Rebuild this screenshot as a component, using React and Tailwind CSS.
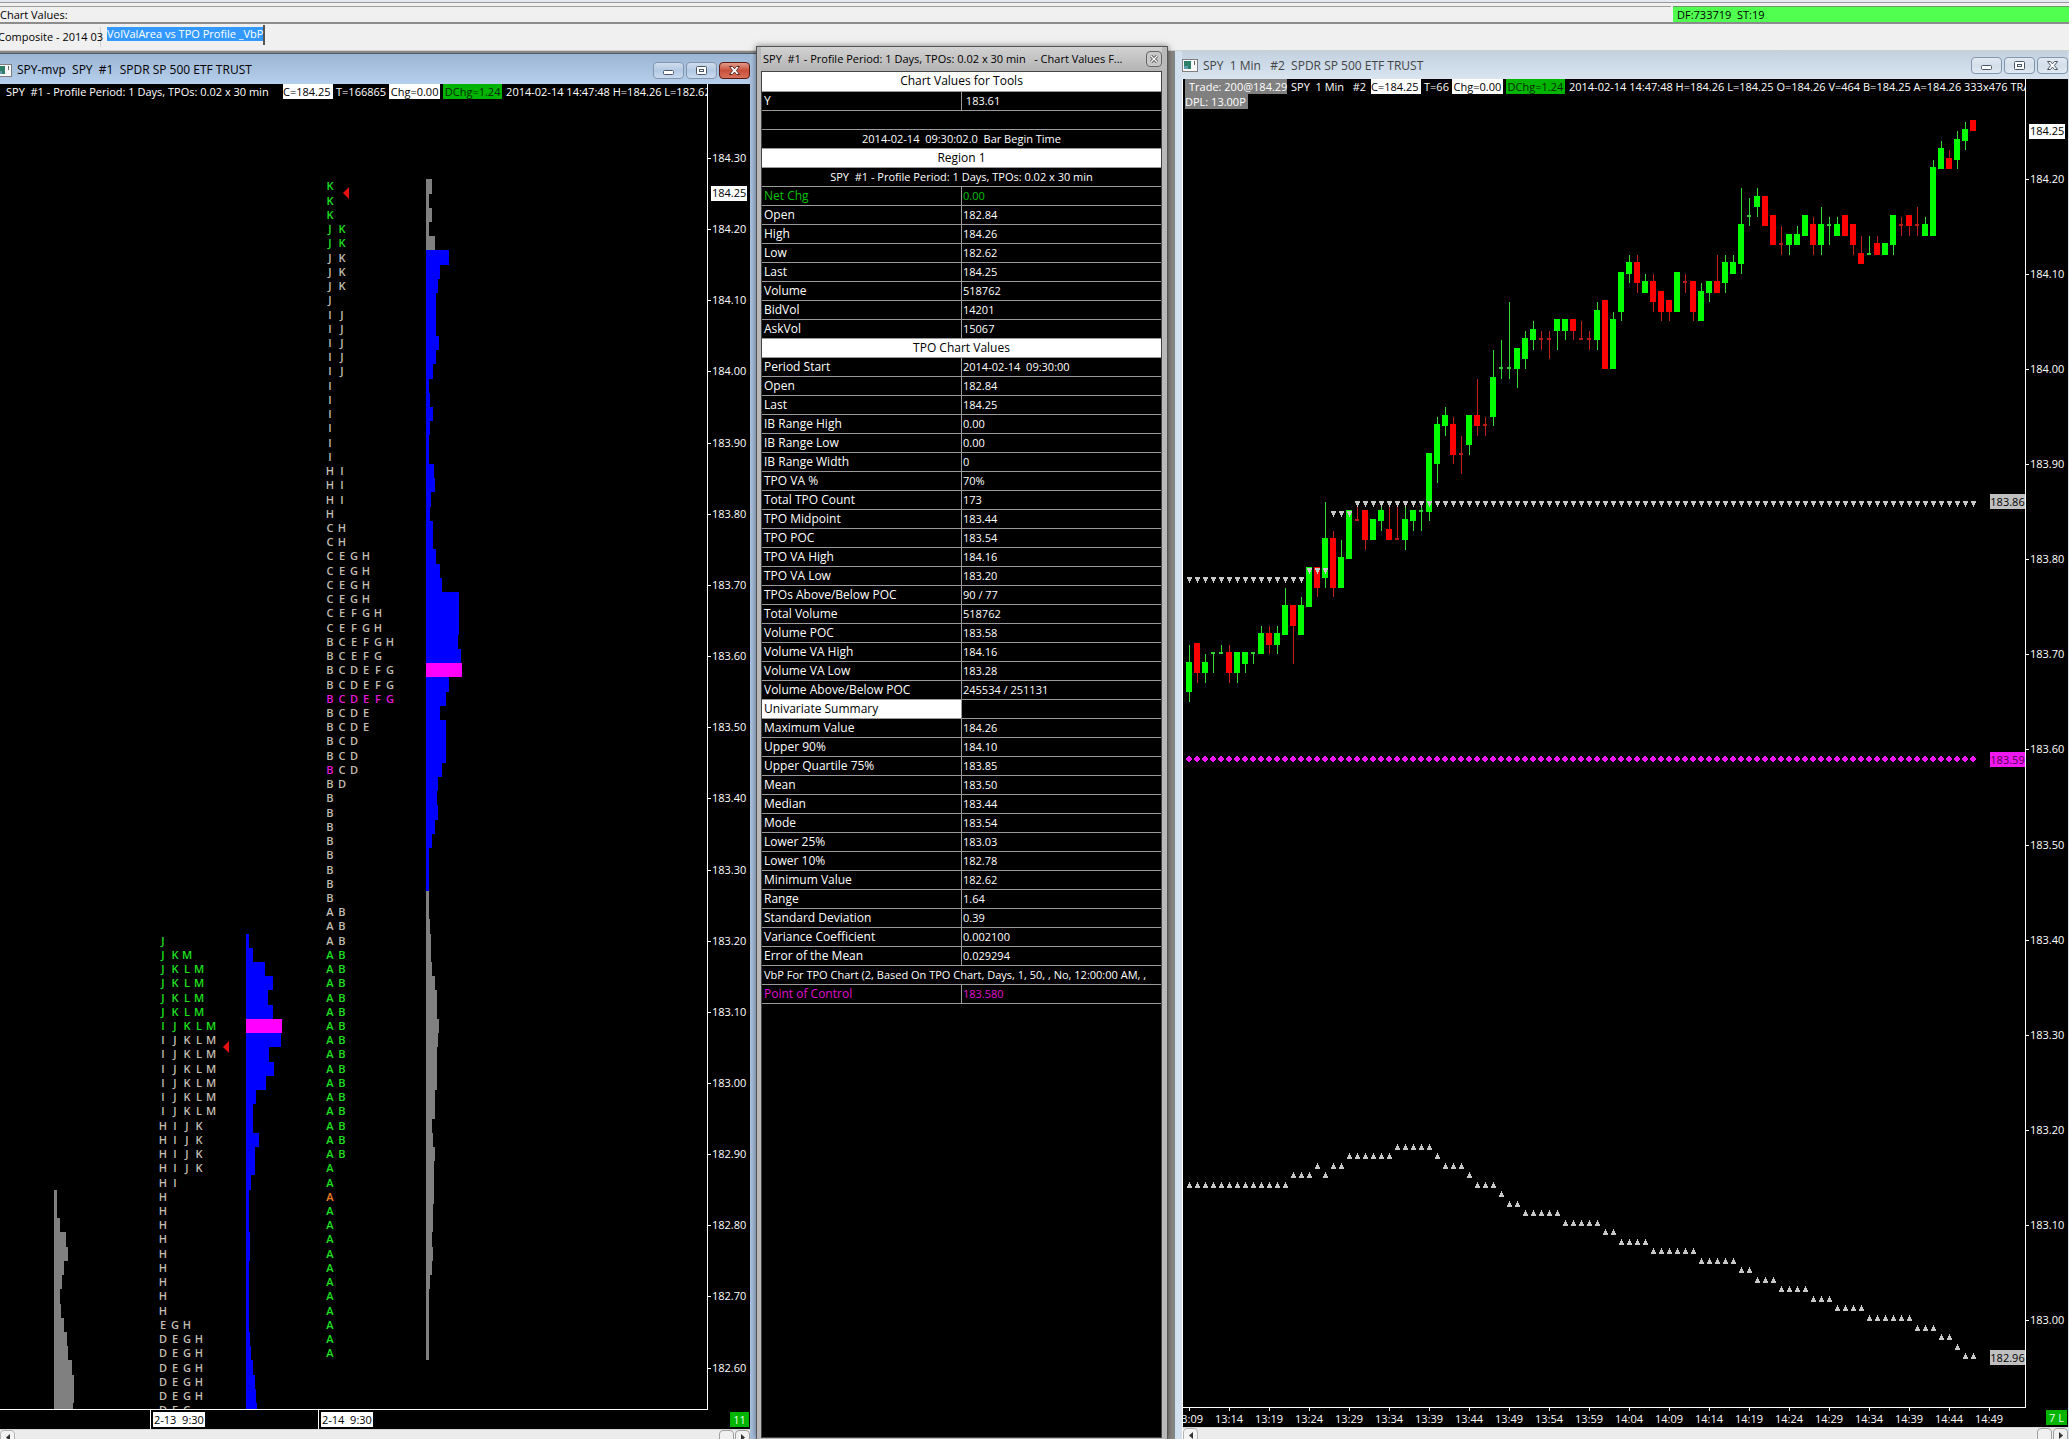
import React from "react";

/* ---------- profile chart (left window) ---------- */

const ROW = 14.23;
// y of a price, given in cents over 184.00
const profileY = (cents) => 74 + (30 - cents) * 7.115;

// [top price in cents over 184.00, number of rows, letters, colour]
const GREEN = "#1fe01f";
const PALE = "#c4beb2";
const PINK = "#e619d8";
const DAY_TWO = [
  [26, 3, "K", GREEN],
  [20, 2, "JK", GREEN],
  [16, 3, "JK", PALE],
  [10, 1, "J", PALE],
  [8, 5, "IJ", PALE],
  [-2, 6, "I", PALE],
  [-14, 3, "HI", PALE],
  [-20, 1, "H", PALE],
  [-22, 2, "CH", PALE],
  [-26, 4, "CEGH", PALE],
  [-34, 2, "CEFGH", PALE],
  [-38, 1, "BCEFGH", PALE],
  [-40, 1, "BCEFG", PALE],
  [-42, 2, "BCDEFG", PALE],
  [-46, 1, "BCDEFG", PINK],
  [-48, 2, "BCDE", PALE],
  [-52, 2, "BCD", PALE],
  [-56, 1, "B", PINK],
  [-56, 1, " CD", PALE],
  [-58, 1, "BD", PALE],
  [-60, 8, "B", PALE],
  [-76, 3, "AB", PALE],
  [-82, 15, "AB", GREEN],
  [-112, 2, "A", GREEN],
  [-116, 1, "A", "#f08020"],
  [-118, 11, "A", GREEN],
];
const DAY_ONE = [
  [-80, 1, "J", GREEN],
  [-82, 1, "JKM", GREEN],
  [-84, 4, "JKLM", GREEN],
  [-92, 1, "IJKLM", GREEN],
  [-94, 6, "IJKLM", PALE],
  [-106, 4, "HIJK", PALE],
  [-114, 1, "HI", PALE],
  [-116, 9, "H", PALE],
  [-134, 1, "EGH", PALE],
  [-136, 5, "DEGH", PALE],
  [-146, 1, "DEG", PALE],
];

const BLUE = "#0000ff";
const GRAY = "#808080";
const MAGENTA = "#ff00ff";
const VOLUMES = [
  { x: 54, top: -116, color: GRAY, widths: [3, 3, 6, 12, 14, 10, 8, 6, 7, 10, 13, 14, 18, 20, 20, 19] },
  {
    x: 246, top: -80, color: BLUE, poc: 6,
    widths: [3, 7, 19, 27, 22, 27, 36, 35, 23, 28, 20, 10, 7, 7, 13, 9, 9, 5, 3, 3, 3, 4, 4, 3, 3, 3, 3, 3, 4, 5, 7, 9, 10, 11],
  },
  { x: 426, top: 26, color: GRAY, widths: [6, 3, 6, 3, 9] },
  {
    x: 426, top: 16, color: BLUE, poc: 29,
    widths: [23, 14, 12, 10, 10, 10, 13, 10, 7, 3, 4, 7, 4, 3, 3, 8, 9, 5, 4, 7, 7, 10, 14, 16, 33, 33, 33, 32, 35, 36, 23, 20, 14, 20, 20, 20, 16, 12, 11, 12, 9, 6, 3, 3, 3],
  },
  {
    x: 426, top: -74, color: GRAY,
    widths: [3, 3, 4, 5, 5, 6, 9, 11, 11, 13, 12, 11, 11, 11, 9, 9, 6, 7, 9, 8, 8, 8, 7, 7, 6, 7, 6, 4, 3, 3, 3, 3, 3],
  },
];

function Letters({ x, rows }) {
  return rows.flatMap(([top, count, letters, color], r) =>
    Array.from({ length: count }, (_, k) =>
      letters.split("").map((ch, i) =>
        ch === " " ? null : (
          <text key={`${r}-${k}-${i}`} x={x + i * 12} y={Math.round(profileY(top - 2 * k)) + 4} fill={color} textAnchor="middle">
            {ch}
          </text>
        )
      )
    )
  );
}

function ProfilePlot() {
  return (
    <svg width="707" height="1325" className="block shrink-0 text-[11px] font-semibold" role="img" aria-label="TPO profile and volume by price">
      {VOLUMES.map((v, n) =>
        v.widths.map((w, i) => {
          const y0 = Math.round(profileY(v.top) - ROW / 2 + i * ROW);
          const y1 = Math.round(profileY(v.top) - ROW / 2 + (i + 1) * ROW);
          return <rect key={`${n}-${i}`} x={v.x} y={y0} width={w} height={y1 - y0} fill={v.poc === i ? MAGENTA : v.color} />;
        })
      )}
      <Letters x={330} rows={DAY_TWO} />
      <Letters x={163} rows={DAY_ONE} />
      <polygon points="343,109 349,103 349,115" fill="#e81010" />
      <polygon points="223,963 229,957 229,969" fill="#e81010" />
    </svg>
  );
}

/* ---------- candle chart (right window) ---------- */

const candleY = (cents) => Math.round(290 - cents * 9.51);

// [direction, body top, body bottom, high, low], prices in cents over 184.00
const CANDLES = [
  ["g", -31, -34, -29, -35], ["r", -29, -32, -29, -33], ["g", -31, -32, -30, -33], ["g", -30, -30, -30, -32],
  ["g", -30, -30, -29, -30], ["r", -30, -32, -29, -33], ["g", -30, -32, -30, -33], ["g", -30, -31, -30, -32],
  ["g", -30, -30, -30, -31], ["g", -28, -30, -27, -30], ["r", -28, -29, -27, -30], ["g", -28, -29, -27, -30],
  ["g", -25, -28, -23, -28], ["r", -25, -27, -25, -31], ["g", -25, -28, -24, -28], ["g", -21, -25, -21, -25],
  ["r", -21, -23, -21, -24], ["g", -18, -22, -14, -23], ["r", -18, -23, -17, -24], ["g", -20, -23, -18, -23],
  ["g", -15, -20, -15, -20], ["r", -16, -16, -14, -16], ["r", -15, -18, -15, -19], ["g", -16, -18, -16, -18],
  ["g", -15, -16, -14, -17], ["r", -17, -18, -14, -18], ["r", -18, -18, -14, -18], ["g", -16, -18, -14, -19],
  ["g", -15, -16, -15, -17], ["g", -15, -15, -14, -17], ["g", -9, -15, -9, -16], ["g", -6, -10, -5, -12],
  ["g", -5, -6, -4, -7], ["r", -6, -9, -5, -10], ["r", -9, -9, -7, -11], ["g", -5, -8, -5, -9],
  ["r", -5, -6, -1, -7], ["r", -6, -6, -5, -7], ["g", -1, -5, 2, -6], ["g", 0, 0, 3, -1],
  ["g", 0, 0, 7, -1], ["g", 2, 0, 2, -2], ["g", 3, 1, 4, 0], ["g", 4, 3, 5, 2],
  ["r", 3, 3, 4, 2], ["r", 3, 3, 4, 1], ["g", 5, 4, 5, 2], ["g", 5, 4, 5, 3],
  ["r", 5, 4, 5, 3], ["r", 3, 3, 5, 3], ["r", 3, 3, 4, 2], ["g", 6, 3, 7, 2],
  ["r", 7, 0, 7, 0], ["g", 5, 0, 6, 0], ["g", 10, 6, 10, 5], ["g", 11, 10, 12, 9],
  ["r", 11, 9, 12, 8], ["g", 9, 8, 10, 8], ["r", 9, 7, 10, 6], ["r", 8, 6, 8, 5],
  ["r", 7, 6, 7, 5], ["g", 10, 6, 10, 6], ["r", 9, 9, 10, 8], ["r", 9, 6, 9, 5],
  ["g", 8, 5, 9, 5], ["g", 9, 8, 9, 7], ["r", 9, 8, 12, 8], ["g", 11, 9, 12, 8],
  ["g", 11, 10, 12, 10], ["g", 15, 11, 19, 10], ["g", 16, 16, 18, 15], ["g", 18, 17, 19, 16],
  ["r", 18, 15, 18, 15], ["r", 16, 13, 16, 13], ["r", 13, 13, 15, 12], ["g", 14, 13, 14, 12],
  ["g", 14, 13, 15, 13], ["g", 16, 14, 16, 14], ["r", 15, 13, 16, 12], ["g", 15, 13, 17, 12],
  ["g", 15, 15, 16, 13], ["g", 15, 14, 16, 14], ["r", 16, 14, 16, 14], ["r", 15, 13, 15, 12],
  ["r", 12, 11, 14, 11], ["g", 12, 12, 14, 12], ["r", 13, 12, 14, 12], ["g", 13, 12, 13, 12],
  ["g", 16, 13, 16, 12], ["r", 15, 15, 16, 14], ["r", 16, 15, 16, 14], ["r", 15, 15, 17, 14],
  ["g", 15, 14, 16, 14], ["g", 21, 14, 22, 14], ["g", 23, 21, 24, 21], ["r", 22, 21, 23, 21],
  ["g", 24, 22, 25, 21], ["g", 25, 24, 26, 23], ["r", 26, 25, 26, 25],
];

// runs of [count, price in cents over 184.00]
const UPPER = [[15, -22], [3, -21], [3, -15], [78, -14]];
const LOWER = [
  [13, -86], [3, -85], [1, -84], [1, -85], [2, -84], [6, -83], [5, -82], [1, -83], [3, -84], [1, -85],
  [3, -86], [1, -87], [2, -88], [5, -89], [5, -90], [2, -91], [4, -92], [6, -93], [5, -94], [2, -95],
  [3, -96], [4, -97], [3, -98], [4, -99], [6, -100], [3, -101], [2, -102], [1, -103], [2, -104],
];
const expand = (runs) => runs.flatMap(([n, c]) => Array(n).fill(c));

function CandlePlot() {
  return (
    <svg width="842" height="1328" className="block shrink-0" role="img" aria-label="One minute candles">
      {CANDLES.map(([dir, top, bottom, high, low], i) => {
        const x = 3 + i * 8;
        const doji = top === bottom;
        const body = doji ? (dir === "g" ? "#2fd02f" : "#b81c1c") : dir === "g" ? "#00ff00" : "#ff0000";
        const wick = dir === "g" ? "#34d834" : "#c01c1c";
        return (
          <g key={i}>
            <rect x={x + 3} y={candleY(high)} width="1" height={candleY(low) - candleY(high)} fill={wick} />
            <rect x={doji ? x + 1 : x} y={candleY(top) - 2} width={doji ? 4 : 6} height={candleY(bottom) - candleY(top) + 2} fill={body} />
          </g>
        );
      })}
      {expand(UPPER).map((c, i) => {
        const x = 4 + i * 8;
        const y = candleY(c) - 1;
        return <path key={i} d={`M${x} ${y}h5v2h-1v2h-1v2h-1v-2h-1v-2h-1z`} fill="#c8c8c8" />;
      })}
      {expand(LOWER).map((c, i) => {
        const x = 4 + i * 8;
        const y = candleY(c) + 1;
        return <path key={i} d={`M${x} ${y}h5v-2h-1v-2h-1v-2h-1v2h-1v2h-1z`} fill="#c8c8c8" />;
      })}
      {CANDLES.map((_, i) => (
        <path key={i} d={`M${3 + i * 8} 679h1v-1h1v-1h2v1h1v1h1v2h-1v1h-1v1h-2v-1h-1v-1h-1z`} fill="#f018f0" />
      ))}
    </svg>
  );
}

/* ---------- shared pieces ---------- */

function PriceAxis({ prices, y, last, lastY, height }) {
  return (
    <svg width="42" height={height} className="block shrink-0 text-[11px]" role="img" aria-label="Price axis">
      {prices.map((p) => (
        <g key={p}>
          <rect x="0" y={Math.round(y(p - 18400))} width="3" height="1" fill="#fff" />
          <text x="4" y={Math.round(y(p - 18400)) + 4} fill="#ffffff">
            {(p / 100).toFixed(2)}
          </text>
        </g>
      ))}
      <rect x="3" y={lastY - 7} width="36" height="15" fill="#fff" />
      <text x="4" y={lastY + 4} fill="#000">{last}</text>
    </svg>
  );
}

function AppIcon() {
  return (
    <svg width="16" height="13" viewBox="0 0 16 13" className="shrink-0" aria-hidden="true">
      <rect x="0.5" y="0.5" width="15" height="12" fill="#f8f8f8" stroke="#7f7f7f" />
      <rect x="2" y="2" width="7" height="8" fill="#2f7f68" />
      <rect x="2" y="7" width="4" height="3" fill="#5a9bb0" />
      <rect x="12" y="2" width="1" height="4" fill="#666" />
    </svg>
  );
}

function TitleButton({ kind, red, label }) {
  const stroke = red ? "#5c2a26" : "#4a5566";
  return (
    <button
      type="button"
      aria-label={label}
      className={
        "flex h-[17px] w-[31px] items-center justify-center rounded-sm border " +
        (red
          ? "border-[#5c1a14] bg-gradient-to-b from-[#e29a8c] via-[#c8503a] to-[#d8705a]"
          : "border-[#8496ad] bg-gradient-to-b from-white/50 via-white/10 to-white/30")
      }
    >
      <svg width="13" height="11" viewBox="0 0 13 11" aria-hidden="true">
        {kind === "min" && <rect x="1.5" y="5.5" width="10" height="4" rx="1" fill="#fff" stroke={stroke} />}
        {kind === "max" && (
          <>
            <rect x="1.5" y="1.5" width="10" height="8" rx="1" fill="#fff" stroke={stroke} />
            <rect x="4.5" y="4.5" width="4" height="2" fill="none" stroke={stroke} />
          </>
        )}
        {kind === "close" && (
          <path d="M1.5 1.5h3l2 2.3 2-2.3h3L8.4 5.5l3.1 4h-3l-2-2.4-2 2.4h-3l3.1-4z" fill="#fff" stroke={stroke} />
        )}
      </svg>
    </button>
  );
}

function Scroller() {
  return (
    <div className="flex h-[12px] shrink-0 justify-between overflow-hidden border-t border-[#d8d8d8] bg-[#ececec]">
      <button type="button" aria-label="Scroll left" className="flex h-[17px] w-[15px] items-start justify-center rounded-sm border border-[#b4b4b4] bg-[#f4f4f4] pt-[3px]">
        <svg width="4" height="7" viewBox="0 0 4 7" aria-hidden="true"><path d="M4 0v7L0 3.5z" fill="#333" /></svg>
      </button>
      <div className="flex gap-px">
        <button type="button" aria-label="Scroll position" className="h-[17px] w-[15px] rounded-sm border border-[#a0a0a0] bg-[#f0f0f0]" />
        <button type="button" aria-label="Scroll right" className="flex h-[17px] w-[15px] items-start justify-center rounded-sm border border-[#a0a0a0] bg-[#f0f0f0] pt-[3px]">
          <svg width="4" height="7" viewBox="0 0 4 7" aria-hidden="true"><path d="M0 0v7l4-3.5z" fill="#333" /></svg>
        </button>
      </div>
    </div>
  );
}

function Quote({ trades, rest }) {
  return (
    <>
      <span className="w-[50px] shrink-0 bg-white text-black">C=184.25</span>
      <span className="shrink-0 px-[3px]">{trades}</span>
      <span className="w-[51px] shrink-0 bg-white text-center text-black">Chg=0.00</span>
      <span className="ml-[3px] w-[59px] shrink-0 bg-[#00b400] text-center text-[#052a05]">DChg=1.24</span>
      <span className="ml-1 shrink-0">{rest}</span>
    </>
  );
}

/* ---------- windows ---------- */

function ProfileWindow() {
  const prices = Array.from({ length: 18 }, (_, i) => 18430 - i * 10);
  return (
    <section className="mt-0.5 flex min-w-0 flex-col overflow-hidden border-t border-[#4a5a70] bg-[#a9c1de] pr-[6px]">
      <header className="flex h-[30px] shrink-0 items-center bg-gradient-to-b from-[#9cb5d3] to-[#b6cfec] pt-0.5 text-black">
        <span className="-ml-1"><AppIcon /></span>
        <h2 className="ml-[5px] grow truncate whitespace-pre text-[12px]">SPY-mvp  SPY  #1  SPDR SP 500 ETF TRUST</h2>
        <div className="flex gap-0.5">
          <TitleButton kind="min" label="Minimize" />
          <TitleButton kind="max" label="Maximize" />
          <TitleButton kind="close" label="Close" red />
        </div>
      </header>
      <div className="flex min-h-0 grow flex-col bg-black">
        <div className="flex h-[1326px] shrink-0">
          <div className="relative min-w-0 grow overflow-hidden border-b border-r border-white">
            <ProfilePlot />
            <div className="absolute inset-x-0 top-0 flex h-[15px] overflow-hidden whitespace-pre pl-1.5 text-[11px] leading-[15px] text-white">
              <span className="w-[277px] shrink-0">SPY  #1 - Profile Period: 1 Days, TPOs: 0.02 x 30 min</span>
              <Quote trades="T=166865" rest="2014-02-14 14:47:48 H=184.26 L=182.62" />
            </div>
          </div>
          <PriceAxis prices={prices} y={profileY} last="184.25" lastY={109} height="1325" />
        </div>
        <div className="flex h-[19px] shrink-0 items-center text-[11px] leading-[15px] text-black">
          <div className="ml-[150px] flex h-full w-[168px] items-center border-l border-white pl-0.5">
            <span className="whitespace-pre bg-white px-px">2-13  9:30</span>
          </div>
          <div className="flex h-full grow items-center border-l border-white pl-0.5">
            <span className="whitespace-pre bg-white px-px">2-14  9:30</span>
          </div>
          <span className="mr-px w-[19px] bg-[#00b400] text-center text-[#e8ffe8]">11</span>
        </div>
        <Scroller />
      </div>
    </section>
  );
}

const VALUES = [
  ["title", "Chart Values for Tools"],
  ["pair", "Y", " 183.61"],
  ["blank"],
  ["wide", "2014-02-14  09:30:02.0  Bar Begin Time"],
  ["title", "Region 1"],
  ["wide", "SPY  #1 - Profile Period: 1 Days, TPOs: 0.02 x 30 min"],
  ["green", "Net Chg", "0.00"],
  ["pair", "Open", "182.84"],
  ["pair", "High", "184.26"],
  ["pair", "Low", "182.62"],
  ["pair", "Last", "184.25"],
  ["pair", "Volume", "518762"],
  ["pair", "BidVol", "14201"],
  ["pair", "AskVol", "15067"],
  ["title", "TPO Chart Values"],
  ["pair", "Period Start", "2014-02-14  09:30:00"],
  ["pair", "Open", "182.84"],
  ["pair", "Last", "184.25"],
  ["pair", "IB Range High", "0.00"],
  ["pair", "IB Range Low", "0.00"],
  ["pair", "IB Range Width", "0"],
  ["pair", "TPO VA %", "70%"],
  ["pair", "Total TPO Count", "173"],
  ["pair", "TPO Midpoint", "183.44"],
  ["pair", "TPO POC", "183.54"],
  ["pair", "TPO VA High", "184.16"],
  ["pair", "TPO VA Low", "183.20"],
  ["pair", "TPOs Above/Below POC", "90 / 77"],
  ["pair", "Total Volume", "518762"],
  ["pair", "Volume POC", "183.58"],
  ["pair", "Volume VA High", "184.16"],
  ["pair", "Volume VA Low", "183.28"],
  ["pair", "Volume Above/Below POC", "245534 / 251131"],
  ["half", "Univariate Summary", ""],
  ["pair", "Maximum Value", "184.26"],
  ["pair", "Upper 90%", "184.10"],
  ["pair", "Upper Quartile 75%", "183.85"],
  ["pair", "Mean", "183.50"],
  ["pair", "Median", "183.44"],
  ["pair", "Mode", "183.54"],
  ["pair", "Lower 25%", "183.03"],
  ["pair", "Lower 10%", "182.78"],
  ["pair", "Minimum Value", "182.62"],
  ["pair", "Range", "1.64"],
  ["pair", "Standard Deviation", "0.39"],
  ["pair", "Variance Coefficient", "0.002100"],
  ["pair", "Error of the Mean", "0.029294"],
  ["left", "VbP For TPO Chart (2, Based On TPO Chart, Days, 1, 50, , No, 12:00:00 AM, ,"],
  ["pink", "Point of Control", "183.580"],
];

const VALUE_STYLES = {
  title: "bg-white text-black text-center text-[12px]",
  wide: "text-center text-[11px]",
  blank: "",
  left: "text-left text-[11px]",
  pair: "text-left",
  green: "text-left text-[#00c000]",
  pink: "text-left text-[#e010d0]",
  half: "text-left bg-white text-black",
};

function ValuesWindow() {
  return (
    <section className="relative -mt-[5px] flex min-w-0 flex-col overflow-hidden border border-b-0 border-[#555] bg-[#b9b9b9] pl-1 pr-[5px] shadow-[0_0_6px_rgba(0,0,0,0.5)]">
      <header className="flex h-[24px] shrink-0 items-center justify-between bg-gradient-to-b from-[#d2d2d2] to-[#b4b4b4] text-black">
        <h2 className="truncate whitespace-pre pl-0.5 text-[11px]">SPY  #1 - Profile Period: 1 Days, TPOs: 0.02 x 30 min   - Chart Values F...</h2>
        <button type="button" aria-label="Close values" className="flex size-[16px] shrink-0 items-center justify-center rounded-sm border border-[#666] bg-[#c8c8c8]">
          <svg width="8" height="8" viewBox="0 0 8 8" aria-hidden="true">
            <path d="M1 1l6 6M7 1l-6 6" stroke="#444" strokeWidth="3" />
            <path d="M1 1l6 6M7 1l-6 6" stroke="#fff" strokeWidth="1.4" />
          </svg>
        </button>
      </header>
      <div className="mb-px grow overflow-hidden border border-[#444] bg-black">
        <table className="w-full table-fixed border-collapse leading-[18px] text-white">
          <tbody>
            {VALUES.map(([kind, label, value], i) =>
              value === undefined ? (
                <tr key={i} className="h-[19px] border-b border-[#9a9a9a]">
                  <td colSpan={2} className={"overflow-hidden whitespace-pre p-0 px-0.5 " + VALUE_STYLES[kind]}>{label}</td>
                </tr>
              ) : (
                <tr key={i} className="h-[19px] border-b border-[#9a9a9a]">
                  <th scope="row" className={"whitespace-pre border-r border-[#9a9a9a] p-0 pl-0.5 text-[12px] font-normal " + VALUE_STYLES[kind]}>{label}</th>
                  <td className={"whitespace-pre p-0 pl-px text-[11px] " + (kind === "half" ? "" : VALUE_STYLES[kind])}>{value}</td>
                </tr>
              )
            )}
          </tbody>
        </table>
      </div>
    </section>
  );
}

function Tag({ y, fill, color, children }) {
  return (
    <span
      className={"absolute right-0 w-[35px] whitespace-nowrap text-center text-[11px] leading-[15px] " + fill + " " + color}
      style={{ top: y - 7 }}
    >
      {children}
    </span>
  );
}

function CandleWindow() {
  const prices = Array.from({ length: 13 }, (_, i) => 18420 - i * 10);
  const times = Array.from({ length: 21 }, (_, i) => {
    const m = 13 * 60 + 9 + i * 5;
    return `${Math.floor(m / 60)}:${String(m % 60).padStart(2, "0")}`;
  });
  return (
    <section className="flex min-w-0 flex-col overflow-hidden border-l border-[#7d8894] bg-[#d3e0ee] pl-[7px] pr-px">
      <header className="flex h-[28px] shrink-0 items-center bg-gradient-to-b from-[#c3d0de] to-[#d8e5f1] pt-px text-[#444]">
        <AppIcon />
        <h2 className="ml-[5px] grow truncate whitespace-pre text-[12px]">SPY  1 Min   #2  SPDR SP 500 ETF TRUST</h2>
        <div className="flex gap-0.5">
          <TitleButton kind="min" label="Minimize chart" />
          <TitleButton kind="max" label="Maximize chart" />
          <TitleButton kind="close" label="Close chart" />
        </div>
      </header>
      <div className="flex min-h-0 grow flex-col border-l border-white bg-black">
        <div className="flex h-[1329px] shrink-0">
          <div className="relative min-w-0 grow overflow-hidden border-b border-r border-white">
            <CandlePlot />
            <div className="absolute inset-x-0 top-0 overflow-hidden whitespace-pre pl-0.5 text-[11px] leading-[15px] text-white">
              <div className="flex h-[15px] overflow-hidden">
                <span className="w-[102px] shrink-0 bg-[#808080] pl-1">Trade: 200@184.29</span>
                <span className="w-[84px] shrink-0 pl-1">SPY  1 Min   #2</span>
                <Quote trades="T=66" rest="2014-02-14 14:47:48 H=184.26 L=184.25 O=184.26 V=464 B=184.25 A=184.26 333x476 TRADES" />
              </div>
              <div className="w-[63px] bg-[#808080]">DPL: 13.00P</div>
            </div>
            <Tag y={422} fill="bg-[#c0c0c0]" color="text-black">183.86</Tag>
            <Tag y={680} fill="bg-[#f018f0]" color="text-[#500050]">183.59</Tag>
            <Tag y={1278} fill="bg-[#c0c0c0]" color="text-black">182.96</Tag>
          </div>
          <PriceAxis prices={prices} y={candleY} last="184.25" lastY={52} height="1328" />
        </div>
        <div className="flex h-[19px] shrink-0 items-center overflow-hidden text-[11px] leading-[15px] text-[#ffffff]">
          <div className="flex min-w-0 grow overflow-hidden">
            {times.map((t, i) => (
              <div key={t} className={"flex w-[40px] shrink-0 flex-col items-center " + (i === 0 ? "-ml-[14px]" : "")}>
                <span className="h-[3px] w-px bg-white" />
                <span className="leading-[16px]">{t}</span>
              </div>
            ))}
          </div>
          <span className="mr-px w-[21px] shrink-0 whitespace-nowrap bg-[#00b400] text-center text-[#e8ffe8]">7 L</span>
        </div>
        <Scroller />
      </div>
    </section>
  );
}

export default function App() {
  return (
    <div className="flex h-screen flex-col overflow-hidden bg-[#f0f0f0] font-['Open_Sans','Noto_Sans',sans-serif] text-black">
      <div className="h-[3px] shrink-0 border-b border-[#9a9a9a] bg-[#e4eaf2]" />
      <div className="mt-[3px] flex h-[18px] shrink-0 items-stretch border-b-2 border-[#8c8c8c] text-[11px] leading-[15px]">
        <div className="mr-0.5 grow border-t border-[#a0a0a0]">Chart Values:</div>
        <output className="w-[396px] whitespace-pre border-t border-[#6a9a6a] bg-[#50ff50] pl-1">DF:733719  ST:19</output>
      </div>
      <nav className="flex h-[27px] shrink-0 items-start border-b border-[#d0d0d0] pt-px text-[11px]">
        <button type="button" className="mt-0.5 h-[20px] w-[101px] shrink-0 whitespace-nowrap border-r border-[#d0d0d0] text-left leading-[20px]">
          <span className="-ml-0.5">Composite - 2014 03</span>
        </button>
        <button type="button" className="flex h-[20px] w-[164px] border-r-2 border-[#555] pl-[6px] pt-0.5 text-left">
          <span className="h-[14px] shrink-0 whitespace-pre bg-[#3399ff] leading-[14px] text-white">VolValArea vs TPO Profile _VbP</span>
        </button>
      </nav>
      <main className="grid min-h-0 grow grid-cols-[756fr_412fr_6fr_895fr] grid-rows-1 bg-[#8b8884]">
        <ProfileWindow />
        <ValuesWindow />
        <div />
        <CandleWindow />
      </main>
    </div>
  );
}
